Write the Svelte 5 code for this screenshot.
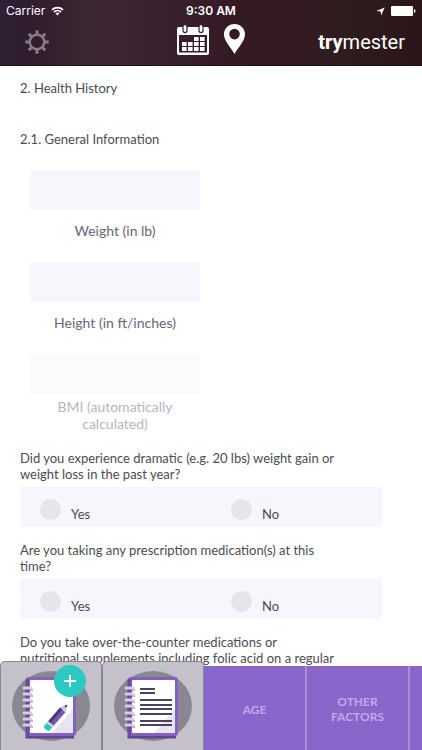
<script lang="ts">
  const fields = [
    { id: 'weight', label: 'Weight (in lb)', auto: false },
    { id: 'height', label: 'Height (in ft/inches)', auto: false },
    { id: 'bmi', label: 'BMI (automatically calculated)', auto: true },
  ];
  const questions = [
    { id: 'change', text: 'Did you experience dramatic (e.g. 20 lbs) weight gain or weight loss in the past year?' },
    { id: 'prescription', text: 'Are you taking any prescription medication(s) at this time?' },
  ];
  const rings = [27, 33, 39, 45, 52, 58, 64];
  const teeth = [0, 45, 90, 135, 180, 225, 270, 315];
  const days = [
    [18, 13], [24, 13],
    [6, 18], [12, 18], [18, 18], [24, 18],
    [6, 23], [12, 23], [18, 23], [24, 23],
  ];
</script>

<div class="app">
  <header>
    <div class="status">
      <div class="carrier">
        <span>Carrier</span>
        <svg width="13" height="10" viewBox="0 0 13 10" fill="none" stroke="#fff" stroke-width="1.7" aria-hidden="true">
          <path d="M1 3.8a8 8 0 0 1 11 0M3 6a5.2 5.2 0 0 1 7 0" />
          <path d="M6.5 9.4 4.6 7.4a2.8 2.8 0 0 1 3.8 0z" fill="#fff" stroke="none" />
        </svg>
      </div>
      <strong>9:30 AM</strong>
      <div class="power">
        <svg width="9" height="9" viewBox="0 0 9 9" fill="#fff" aria-hidden="true"><path d="M8.6.4 5.2 8.6 4.6 4.6.4 4z" /></svg>
        <svg width="25" height="10" viewBox="0 0 25 10" fill="#fff" aria-hidden="true"><rect width="22" height="10" rx="1" /><path d="M23 3q1.6.4 1.6 2T23 7z" /></svg>
      </div>
    </div>
    <div class="bar">
      <button class="gear" aria-label="Settings">
        <svg width="24" height="24" viewBox="-12 -12 24 24" fill="none" stroke="#877b89">
          <circle r="7.3" stroke-width="2.4" />
          {#each teeth as angle}
            <path d="M0-8V-11.7" stroke-width="3" transform="rotate({angle})" />
          {/each}
        </svg>
      </button>
      <div class="center">
        <button aria-label="Calendar">
          <svg width="32" height="31" viewBox="0 0 32 31">
            <path fill="#fff" fill-rule="evenodd" d="M2 3H30Q32 3 32 5V29Q32 31 30 31H2Q0 31 0 29V5Q0 3 2 3ZM2 11V28.6H30V11Z" />
            <g fill="#fff" stroke="#321f2c" stroke-width="1.2"><rect x="6" y=".6" width="4" height="8" rx="2" /><rect x="22" y=".6" width="4" height="8" rx="2" /></g>
            {#each days as [x, y]}
              <rect x={x - 1} {y} width="4.6" height="4" fill="#fff" />
            {/each}
          </svg>
        </button>
        <button aria-label="Locations">
          <svg width="21" height="30" viewBox="0 0 21 30"><path fill="#fff" fill-rule="evenodd" d="M10.5 0C4.6 0 0 4.6 0 10.3 0 17 6.5 23 10.5 30 14.5 23 21 17 21 10.3 21 4.6 16.4 0 10.5 0ZM10.5 4.8a5.3 5.3 0 1 1 0 10.6a5.3 5.3 0 0 1 0-10.6Z" /></svg>
        </button>
      </div>
      <div class="brand"><b>try</b>mester</div>
    </div>
  </header>

  <main>
    <h1>2. Health History</h1>
    <h2>2.1. General Information</h2>
    <div class="fields">
      {#each fields as field}
        <div class="field" class:auto={field.auto}>
          <input id={field.id} type="text" readonly={field.auto} />
          <label for={field.id}>{field.label}</label>
        </div>
      {/each}
    </div>
    {#each questions as question}
      <fieldset>
        <legend>{question.text}</legend>
        <div class="choices">
          {#each ['Yes', 'No'] as choice}
            <label><input type="radio" name={question.id} value={choice} /><span>{choice}</span></label>
          {/each}
        </div>
      </fieldset>
    {/each}
    <p>Do you take over-the-counter medications or nutritional supplements including folic acid on a regular</p>
  </main>

  {#snippet notebook(kind: string)}
    <svg class="book" viewBox="0 0 100 88" aria-hidden="true">
      <ellipse cx="50" cy="44" rx="39" ry="35" fill="#898791" />
      <path d="M26 17V75H73" fill="none" stroke="#62458f" stroke-width="3" />
      <rect x="25" y="15" width="50" height="59" rx="3" fill="#8461bd" />
      <path d="M25 17H28V75H25Z" fill="#6a4b9c" />
      <rect x="29" y="18" width="43" height="53" rx="1" fill="#fff" />
      <path d="M72 47V71H51Z" fill="#e6e5f0" />
      {#each rings as y}
        <path d="M29 {y + 1}h3" stroke="#a5a1b3" stroke-width="1.5" />
        <path d="M23 {y - 1}h7" stroke="#d3d0db" stroke-width="3" stroke-linecap="round" />
      {/each}
      {#if kind === 'write'}
        <g transform="translate(46 66) rotate(41)">
          <path d="M-3.5-4H3.5V0Q3.5 2 0 2T-3.5 0Z" fill="#2cc5bf" />
          <path d="M-3.5-5H3.5V-24H-3.5Z" fill="#7b55b4" />
          <path d="M-3.5-5H-.5V-24H-3.5Z" fill="#4a3a77" />
          <path d="M-3.5-6H3.5V-4H-3.5Z" fill="#dad8e2" />
          <path d="M-3.5-24 0-31 3.5-24Z" fill="#c9c4cf" />
          <path d="M-1.5-28 0-31 1.5-28Z" fill="#3d3952" />
        </g>
        <circle cx="69" cy="19" r="16" fill="#2bc9c2" />
        <path d="M63 19H75M69 13V25" stroke="#fff" stroke-width="1.8" />
      {:else}
        <path d="M37 27H52M37 31H52M37 38H69M37 43H69M37 47H69M37 52H69M37 59H69M37 63H69" stroke="#49435f" stroke-width="2" />
      {/if}
    </svg>
  {/snippet}

  <nav>
    <button class="tab" aria-label="New note">{@render notebook('write')}</button>
    <button class="tab" aria-label="Notes">{@render notebook('read')}</button>
    <a href="#age">AGE</a>
    <a href="#other">OTHER FACTORS</a>
    <a href="#more" aria-label="More"></a>
  </nav>
</div>

<style>
  :global(body) { margin: 0; background: #fff; }
  .app {
    display: flex;
    flex-direction: column;
    height: 100vh;
    overflow: hidden;
    font-family: Lato, "Liberation Sans", sans-serif;
    font-size: 13px;
    line-height: 16px;
    color: #4d4b52;
  }
  button { padding: 0; border: 0; background: none; }
  svg { display: block; }
  header {
    flex: none;
    height: 66px;
    box-sizing: border-box;
    border-bottom: 1px solid #1c0f19;
    background: linear-gradient(90deg, #301f34 0%, #2f1c2e 7%, #3c2832 22%, #3a2330 36%, #341a25 55%, #351a23 68%, #2d1c1d 84%, #2c1518 100%);
    color: #fff;
    font-family: Inter, "Liberation Sans", sans-serif;
  }
  .status, .bar {
    display: grid;
    grid-template-columns: 1fr auto 1fr;
    align-items: center;
  }
  .status { height: 22px; padding: 0 6px; font-size: 12px; }
  .status strong { font-weight: 600; }
  .carrier, .power { display: flex; align-items: center; gap: 6px; }
  .power { justify-content: flex-end; }
  .bar { height: 40px; padding: 0 17px; }
  .gear { justify-self: start; margin-left: 8px; }
  .center { display: flex; align-items: center; gap: 15px; height: 34px; align-self: start; }
  .brand { justify-self: end; font: 20px/24px Roboto, sans-serif; }
  .brand b { font-weight: 700; }
  main { flex: 1; min-height: 0; overflow: hidden; padding: 14px 40px 0 20px; }
  h1, h2 { margin: 0; font-size: 13px; font-weight: 400; line-height: 17px; }
  h2 { margin-top: 34px; }
  .fields { margin: 22px 0 18px 10px; width: 170px; display: grid; gap: 18px; }
  .field input {
    display: block;
    width: 100%;
    height: 40px;
    box-sizing: border-box;
    border: 0;
    padding: 0 8px;
    background: #f7f6fc;
    text-align: center;
    font: inherit;
  }
  .field label { display: block; padding: 12px 12px 5px; text-align: center; line-height: 17px; font-size: 14px; color: #696578; }
  .field.auto input { background: #fbfbfe; }
  .field.auto label { padding: 4px 12px 0; color: #b7b5be; }
  fieldset { margin: 0 0 15px; border: 0; padding: 0; min-width: 0; }
  legend, p { margin: 0; padding: 0; max-width: 317px; }
  .choices { display: grid; grid-template-columns: 191px 1fr; margin-top: 5px; padding-left: 20px; height: 40px; background: #f7f6fc; }
  .choices label { display: flex; gap: 10px; padding-top: 12px; }
  .choices span { padding-top: 7px; }
  .choices input { appearance: none; width: 21px; height: 21px; margin: 0; border-radius: 50%; background: #e6e5eb; }
  nav {
    position: relative;
    flex: none;
    display: flex;
    align-items: flex-end;
    height: 84px;
  }
  .tab {
    flex: 0 0 102px;
    box-sizing: border-box;
    display: flex;
    align-items: flex-start;
    height: 89px;
    border: 1px solid #8b8790;
    border-bottom: 0;
    border-radius: 5px 5px 0 0;
    background: #c5c1ca;
  }
  .book { width: 100%; }
  nav a {
    flex: 0 0 103px;
    box-sizing: border-box;
    display: flex;
    align-items: center;
    justify-content: center;
    height: 84px;
    padding: 2px 16px 0;
    border-right: 2px solid #aa8fd7;
    background: #8966c9;
    color: #c2a7ec;
    text-align: center;
    text-decoration: none;
    font-size: 12px;
    font-weight: 700;
    line-height: 15px;
  }
</style>
